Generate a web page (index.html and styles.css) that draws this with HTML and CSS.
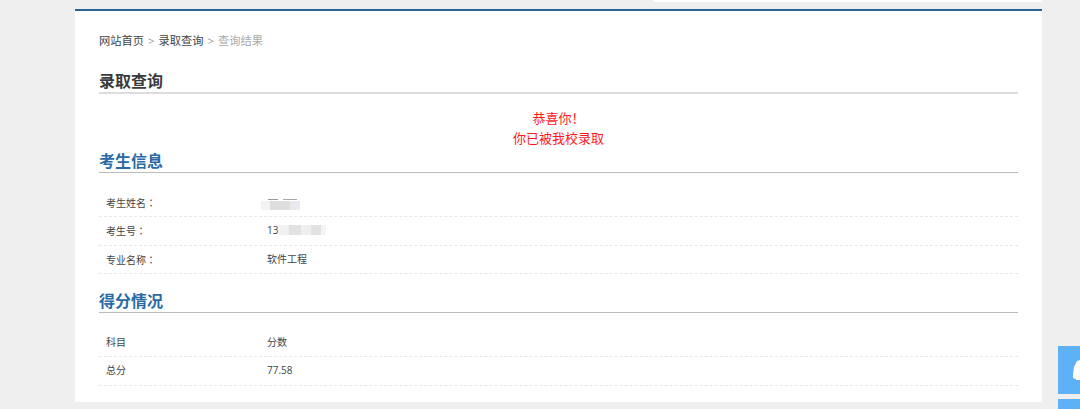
FILE: index.html
```html
<!DOCTYPE html>
<html lang="zh-CN">
<head>
  <meta charset="UTF-8">
  <title>录取查询</title>
  <link rel="stylesheet" href="styles.css">
</head>
<body>

  <div class="top-strip"></div>

  <main class="content">
    <div class="breadcrumb">
      <a>网站首页</a><span class="sep">&gt;</span><a>录取查询</a><span class="sep">&gt;</span><span class="current">查询结果</span>
    </div>

    <h2 class="page-title">录取查询</h2>

    <p class="message">恭喜你！<br>你已被我校录取</p>

    <!-- Student info -->
    <h3 class="section-title first">考生信息</h3>
    <div class="rows">
      <div class="row">
        <div class="label">考生姓名<span class="colon" lang="zh-TW">：</span></div>
        <div class="value"><span class="smudge name"></span></div>
      </div>
      <div class="row">
        <div class="label">考生号<span class="colon" lang="zh-TW">：</span></div>
        <div class="value">13<span class="smudge number"></span></div>
      </div>
      <div class="row">
        <div class="label">专业名称<span class="colon" lang="zh-TW">：</span></div>
        <div class="value">软件工程</div>
      </div>
    </div>

    <!-- Score -->
    <h3 class="section-title">得分情况</h3>
    <div class="rows">
      <div class="row">
        <div class="label">科目</div>
        <div class="value">分数</div>
      </div>
      <div class="row">
        <div class="label">总分</div>
        <div class="value">77.58</div>
      </div>
    </div>
  </main>

  <div class="side-tools">
    <div class="side-btn">
      <svg class="side-icon" width="22" height="48" viewBox="0 0 22 48"><path d="M22 14l-3 1-3 6-1 7v4l3 1v1h4z" fill="#fff"/></svg>
    </div>
    <div class="side-btn"></div>
  </div>

</body>
</html>
```

FILE: styles.css
```css
/* Base styles */
html, body {
  height: 409px;
  overflow: hidden;
}

body {
  margin: 0;
  background-color: #efefef;
  color: #444;
  font-family: "Open Sans", "Noto Sans CJK SC", sans-serif;
  font-size: 10px;
}

.top-strip {
  height: 2px;
  width: 389px;
  margin-left: 653px;
  background: #fff;
}

.content {
  box-sizing: border-box;
  width: 967px;
  height: 393px;
  margin: 7px 0 0 75px;
  padding: 22px 24px 0;
  background: #fff;
  border-top: 2px solid #2a6496;
}

/* Breadcrumb */
.breadcrumb {
  height: 16px;
  line-height: 16px;
  font-size: 11.25px;
  color: #444;
}

.breadcrumb .sep {
  margin: 0 4px;
  color: #999;
}

.breadcrumb .current {
  color: #aaa;
}

/* Headings */
.page-title,
.section-title {
  margin: 0;
  font-size: 16px;
  line-height: 22px;
  font-weight: 700;
}

.page-title {
  margin-top: 21px;
  color: #3b3b3b;
  border-bottom: 2px solid #dddddd;
}

.section-title {
  margin-top: 16px;
  color: #2a6aa5;
  border-bottom: 1px solid #bbbbbb;
}

.section-title.first {
  margin-top: 2px;
}

.message {
  margin: 14px 0 0;
  line-height: 20px;
  font-size: 13px;
  color: #ff1a1a;
  text-align: center;
}

/* Info rows */
.rows {
  margin-top: 16px;
}

.row {
  display: flex;
  height: 27.33px;
  line-height: 27.33px;
  border-bottom: 1px dashed #e8e8e8;
}

.label {
  width: 162px;
  padding-left: 7px;
  box-sizing: border-box;
}

.colon {
  font-family: "Noto Sans CJK TC", sans-serif;
}

.value {
  padding-left: 6px;
  display: flex;
  align-items: center;
}

/* Blurred-out personal data */
.smudge {
  display: block;
  filter: blur(0.6px);
}

.smudge.name {
  width: 39px;
  height: 11px;
  margin: 3px 0 0 -6px;
  background:
    linear-gradient(#999, #999) 7px 0 / 10px 1px no-repeat,
    linear-gradient(#aaa, #aaa) 22px 0 / 14px 1px no-repeat,
    linear-gradient(90deg, #f3f3f3 0 9px, #dedede 9px 29px, #e9e9ef 29px) 0 2px / 100% 9px no-repeat;
}

.smudge.number {
  width: 47px;
  height: 10px;
  margin: -1px 0 0 1px;
  background: linear-gradient(90deg, #f1f1f1 0 10px, #e2e0e0 10px 22px, #eef0f0 22px 32px, #e2e2e2 32px 42px, #f5f5f5 42px);
}

/* Floating side buttons */
.side-tools {
  position: fixed;
  left: 1058px;
  top: 346px;
  display: flex;
  flex-direction: column;
  gap: 5px;
}

.side-btn {
  width: 22px;
  height: 48px;
  background: #5eb1f5;
}

.side-icon {
  display: block;
}
```
